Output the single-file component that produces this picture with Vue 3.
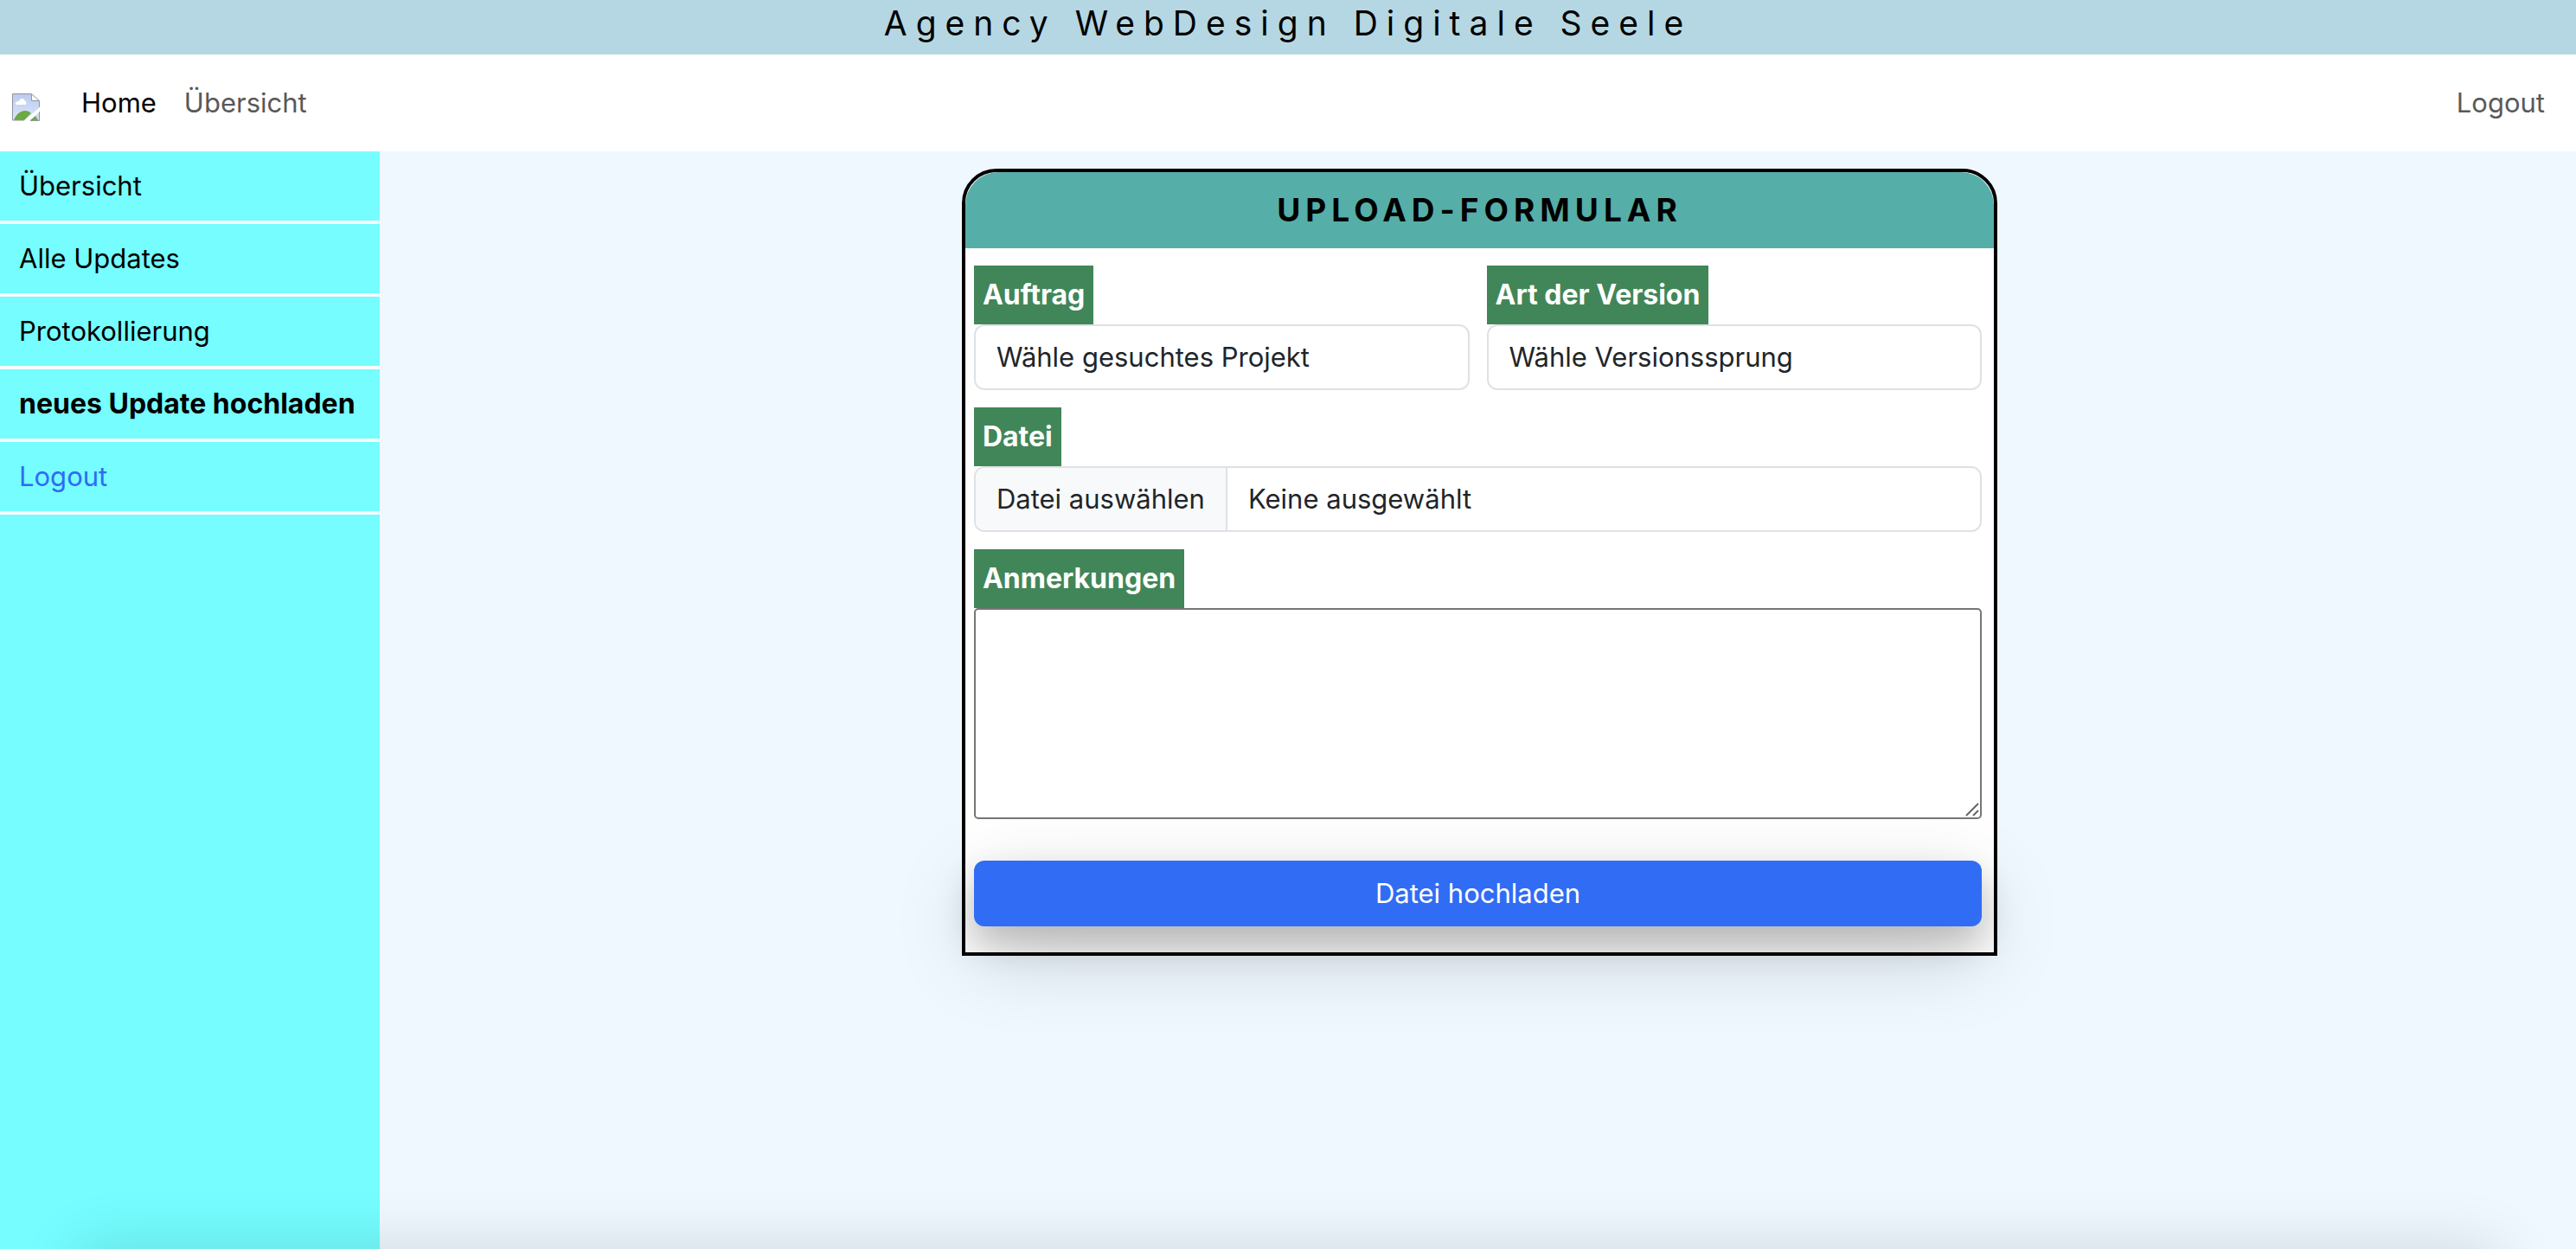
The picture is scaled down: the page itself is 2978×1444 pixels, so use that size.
<script setup>
import { ref } from 'vue'

const sideLinks = [
  { text: 'Übersicht' },
  { text: 'Alle Updates' },
  { text: 'Protokollierung' },
  { text: 'neues Update hochladen', kind: 'active' },
  { text: 'Logout', kind: 'logout' }
]

const project = ref('')
const version = ref('')
const notes = ref('')
const fileName = ref('Keine ausgewählt')

function pickFile(event) {
  const file = event.target.files[0]
  fileName.value = file ? file.name : 'Keine ausgewählt'
}
</script>

<template>
  <div class="page">
    <header class="banner">Agency WebDesign Digitale Seele</header>

    <nav class="topnav">
      <a class="brand" href="#" aria-label="Startseite">
        <svg width="32" height="32" viewBox="0 0 32 32" aria-hidden="true">
          <defs>
            <linearGradient id="sky" x1="0" y1="0" x2="0" y2="1">
              <stop offset="0" stop-color="#bccbf0" />
              <stop offset="1" stop-color="#dbe6fa" />
            </linearGradient>
          </defs>
          <path d="M1 1H22L31 9V17L14 31H1Z" fill="url(#sky)" />
          <path d="M31 22V31H21Z" fill="#cddaf5" />
          <path d="M2 31C4 25 9 20 15 20C18 20 20 21 22 23L14 31Z" fill="#6da944" />
          <path d="M21 31L27 26L30 31Z" fill="#6da944" />
          <path d="M4 13C3 10 6 9 8 9C9 5 14 5 15 9C17 9 17 13 15 13Z" fill="#fff" />
          <path d="M22 1V9H31Z" fill="#fff" />
          <path d="M14 31H0.5V0.5H22.500L31.500 8.500V16M22.500 1V8.500H31M31.500 21V31.500H21" fill="none" stroke="#93959c" />
        </svg>
      </a>
      <a class="toplink current" href="#">Home</a>
      <a class="toplink" href="#">Übersicht</a>
      <a class="toplink end" href="#">Logout</a>
    </nav>

    <div class="body">
      <aside class="sidebar">
        <a v-for="link in sideLinks" :key="link.text" href="#" class="sidelink" :class="link.kind">{{ link.text }}</a>
      </aside>

      <main class="content">
        <form class="card" @submit.prevent>
          <h1 class="card-title">Upload-Formular</h1>
          <div class="card-body">
            <div class="row">
              <div class="field">
                <label class="tag" for="project">Auftrag</label>
                <select id="project" v-model="project" class="control">
                  <option value="">Wähle gesuchtes Projekt</option>
                </select>
              </div>
              <div class="field">
                <label class="tag" for="version">Art der Version</label>
                <select id="version" v-model="version" class="control">
                  <option value="">Wähle Versionssprung</option>
                </select>
              </div>
            </div>

            <div class="field">
              <label class="tag" for="file">Datei</label>
              <div class="control file">
                <span class="file-button">Datei auswählen</span>
                <span class="file-name">{{ fileName }}</span>
                <input id="file" class="file-input" type="file" @change="pickFile" />
              </div>
            </div>

            <div class="field">
              <label class="tag" for="notes">Anmerkungen</label>
              <div class="notes-box">
                <textarea id="notes" v-model="notes" class="notes"></textarea>
                <svg class="grip" width="16" height="16" viewBox="0 0 16 16" aria-hidden="true">
                  <path d="M1 15L15 1M9 15L15 9" fill="none" stroke="#666" stroke-width="2" />
                </svg>
              </div>
            </div>

            <button class="submit" type="submit">Datei hochladen</button>
          </div>
        </form>
      </main>
    </div>

    <div class="bottom-shade"></div>
  </div>
</template>

<style>
body {
  margin: 0;
}
</style>

<style scoped>
.page {
  position: relative;
  display: flex;
  flex-direction: column;
  min-height: 100vh;
  overflow: hidden;
  background: #f0f8ff;
  color: #000;
  font-family: Inter, "Liberation Sans", sans-serif;
  font-size: 31px;
  line-height: 48px;
}

.page * {
  box-sizing: border-box;
}

a {
  text-decoration: none;
}

.banner {
  padding: 3px 0 12px;
  background: #b5d7e3;
  font-size: 39px;
  letter-spacing: 10px;
  text-align: center;
}

.topnav {
  display: flex;
  align-items: center;
  gap: 32px;
  height: 112px;
  padding: 0 36px 0 14px;
  background: #fff;
}

.brand {
  display: flex;
  margin: 10px 16px 0 0;
}

.toplink {
  color: #595959;
}

.toplink.current {
  color: #000;
}

.toplink.end {
  margin-left: auto;
}

.body {
  display: flex;
  flex: 1;
}

.sidebar {
  flex: none;
  width: 439px;
  background: #75fdff;
}

.sidelink {
  display: block;
  padding: 16px 22px;
  border-bottom: 4px solid #f6fcff;
  color: #000;
}

.sidelink.active {
  font-size: 32px;
  font-weight: 700;
}

.sidelink.logout {
  color: #306bf3;
}

.content {
  flex: 1;
  padding: 20px 0 0 4px;
}

.card {
  width: calc(40vw + 6px);
  margin: 0 auto;
  border: 4px solid #000;
  border-radius: 40px 40px 0 0;
  background: #fff;
}

.card-title {
  margin: 0;
  padding: 20px 0;
  border-radius: 38px 38px 0 0;
  background: #56aea8;
  font-size: 37px;
  font-weight: 700;
  letter-spacing: 6px;
  text-align: center;
  text-transform: uppercase;
}

.card-body {
  display: flex;
  flex-direction: column;
  gap: 20px;
  padding: 20px 14px 30px 10px;
}

.row {
  display: grid;
  grid-template-columns: 1fr 1fr;
  gap: 20px;
}

.field {
  display: flex;
  flex-direction: column;
  align-items: flex-start;
}

.tag {
  padding: 10px;
  background: #418658;
  color: #fff;
  font-size: 32px;
  font-weight: 700;
}

.control {
  width: 100%;
  height: 76px;
  padding: 12px 24px;
  border: 2px solid #dee2e6;
  border-radius: 12px;
  appearance: none;
  background: #fff;
  color: #212529;
  font: inherit;
}

.file {
  position: relative;
  display: flex;
  padding: 0;
  overflow: hidden;
}

.file-button {
  padding: 12px 24px;
  border-right: 2px solid #dee2e6;
  background: #f8f9fa;
}

.file-name {
  padding: 12px 24px;
}

.file-input {
  position: absolute;
  inset: 0;
  opacity: 0;
}

.notes-box {
  position: relative;
  width: 100%;
}

.notes {
  display: block;
  width: 100%;
  height: 244px;
  padding: 4px;
  border: 2px solid #767676;
  border-radius: 5px;
  background: #fff;
  font: inherit;
  resize: none;
}

.grip {
  position: absolute;
  right: 3px;
  bottom: 3px;
}

.submit {
  height: 76px;
  margin-top: 28px;
  padding: 0;
  border: 0;
  border-radius: 12px;
  background: #316cf4;
  box-shadow:
    0 20px 40px rgba(0, 0, 0, 0.2),
    0 32px 96px rgba(0, 0, 0, 0.18);
  color: #fff;
  font: inherit;
}

.bottom-shade {
  position: absolute;
  top: 100%;
  right: 90px;
  left: 90px;
  height: 120px;
  box-shadow: 0 0 72px rgba(0, 0, 0, 0.14);
}
</style>
